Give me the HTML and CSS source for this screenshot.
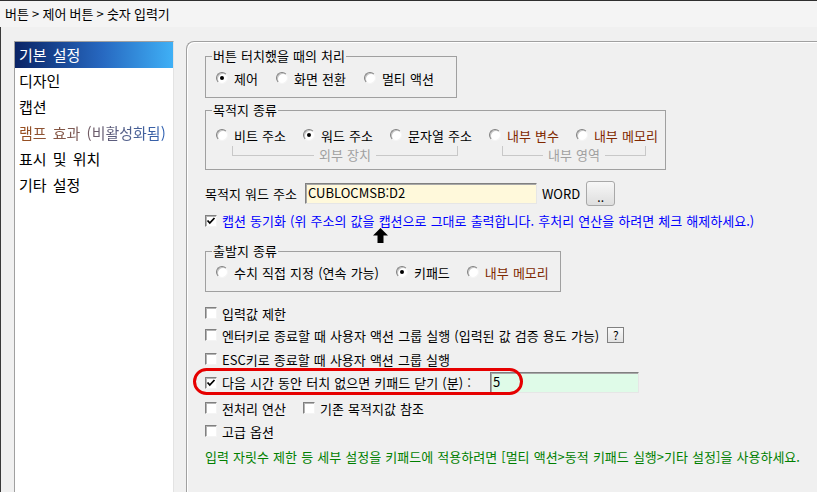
FILE: index.html
```html
<!DOCTYPE html>
<html lang="ko">
<head>
    <meta charset="UTF-8">
    <meta name="viewport" content="width=device-width, initial-scale=1.0">
    <title>숫자 입력기</title>
    <link rel="stylesheet" href="styles.css">
</head>
<body>
<div class="crumb">버튼 &gt; 제어 버튼 &gt; 숫자 입력기</div>

<div class="main">
    <ul class="menu">
        <li class="active">기본 설정</li>
        <li>디자인</li>
        <li>캡션</li>
        <li><span class="dim">램프 효과 (비활성화됨)</span></li>
        <li>표시 및 위치</li>
        <li>기타 설정</li>
    </ul>

    <div class="panel">
        <fieldset class="group g1">
            <legend>버튼 터치했을 때의 처리</legend>
            <div class="radios wide">
                <label class="opt"><span class="radio on"></span>제어</label>
                <label class="opt"><span class="radio"></span>화면 전환</label>
                <label class="opt"><span class="radio"></span>멀티 액션</label>
            </div>
        </fieldset>

        <fieldset class="group g2">
            <legend>목적지 종류</legend>
            <div class="radios">
                <label class="opt"><span class="radio"></span>비트 주소</label>
                <label class="opt"><span class="radio on"></span>워드 주소</label>
                <label class="opt"><span class="radio"></span>문자열 주소</label>
                <label class="opt brown"><span class="radio"></span>내부 변수</label>
                <label class="opt brown"><span class="radio"></span>내부 메모리</label>
            </div>
            <div class="ranges">
                <div class="range outer"><span>외부 장치</span></div>
                <div class="range inner"><span>내부 영역</span></div>
            </div>
        </fieldset>

        <div class="addr">
            <span class="addr-label">목적지 워드 주소</span>
            <input class="field" type="text" value="CUBLOCMSB:D2">
            <span class="unit">WORD</span>
            <button class="dots">..</button>
        </div>

        <div class="check-row sync">
            <span class="box on"><svg width="10" height="10" viewBox="0 0 10 10"><path d="M1.5 4.5 L3.8 7 L8.5 2" fill="none" stroke="#000" stroke-width="1.8"/></svg></span>
            <span class="blue">캡션 동기화 (위 주소의 값을 캡션으로 그대로 출력합니다. 후처리 연산을 하려면 체크 해제하세요.)</span>
        </div>
        <svg class="arrow" width="15" height="15" viewBox="0 0 15 15"><polygon points="7.5,0 15,7.5 10.5,7.5 10.5,15 4.5,15 4.5,7.5 0,7.5" fill="#000"/></svg>

        <fieldset class="group g3">
            <legend>출발지 종류</legend>
            <div class="radios">
                <label class="opt"><span class="radio"></span>수치 직접 지정 (연속 가능)</label>
                <label class="opt"><span class="radio on"></span>키패드</label>
                <label class="opt brown"><span class="radio"></span>내부 메모리</label>
            </div>
        </fieldset>

        <div class="check-row r1"><span class="box"></span>입력값 제한</div>
        <div class="check-row r2"><span class="box"></span>엔터키로 종료할 때 사용자 액션 그룹 실행 (입력된 값 검증 용도 가능)<button class="help">?</button></div>
        <div class="check-row r3"><span class="box"></span>ESC키로 종료할 때 사용자 액션 그룹 실행</div>
        <div class="check-row r4">
            <span class="box on"><svg width="10" height="10" viewBox="0 0 10 10"><path d="M1.5 4.5 L3.8 7 L8.5 2" fill="none" stroke="#000" stroke-width="1.8"/></svg></span>
            <span class="timeout-label">다음 시간 동안 터치 없으면 키패드 닫기 (분) :</span>
            <input class="field mint" type="text" value="5">
            <div class="ring"></div>
        </div>
        <div class="check-row r5">
            <span class="box"></span>전처리 연산
            <span class="box second"></span>기존 목적지값 참조
        </div>
        <div class="check-row r6"><span class="box"></span>고급 옵션</div>
        <div class="note">입력 자릿수 제한 등 세부 설정을 키패드에 적용하려면 [멀티 액션&gt;동적 키패드 실행&gt;기타 설정]을 사용하세요.</div>
    </div>
</div>
</body>
</html>
```

FILE: styles.css
```css
body {
    margin: 0;
    background-color: #f0f0f0;
    font-family: "Noto Sans CJK KR", "Noto Sans", sans-serif;
    font-size: 13px;
    color: #000;
    overflow: hidden;
}

.crumb {
    height: 26px;
    line-height: 26px;
    border-top: 1px solid #2f2f2f;
    background-color: #f4f4f4;
    padding-left: 5px;
    font-size: 13px;
    word-spacing: -0.5px;
}

.main {
    display: flex;
    height: 490px;
    padding-top: 14px;
    border-left: 1px solid #3a3a3a;
    box-sizing: border-box;
}

/* left menu */

.menu {
    list-style: none;
    margin: 0 0 0 13px;
    padding: 0;
    width: 160px;
    box-sizing: border-box;
    background: #fff;
    border: 1px solid;
    border-color: #a0a0a0 #e3e3e3 #e3e3e3 #a0a0a0;
    font-size: 15px;
    word-spacing: 2px;
}

.menu li {
    height: 26px;
    line-height: 26px;
    padding-left: 4px;
    white-space: nowrap;
}

.menu li.active {
    color: #fff;
    background: linear-gradient(90deg, #0a2466, #2768c0 55%, #3fb0f6);
}

.menu .dim {
    background: linear-gradient(90deg, #9a4e1c, #7a5a58 40%, #2f62b4);
    -webkit-background-clip: text;
    background-clip: text;
    color: transparent;
}

/* right panel */

.panel {
    flex: 1;
    margin-left: 12px;
    padding: 7px 0 0 18px;
    border-top: 1px solid #a0a0a0;
    border-left: 1px solid #a0a0a0;
    border-top-left-radius: 8px;
    box-shadow: inset 1px 1px 0 #fff;
    word-spacing: 0.5px;
}

.group {
    margin: 0;
    padding: 7px 0 11px 6px;
    border: 1px solid #a0a0a0;
    box-sizing: border-box;
    min-width: 0;
}

.group legend {
    padding: 0 1px;
    line-height: 14px;
}

.g1 {
    width: 252px;
}

.g2 {
    width: 461px;
    margin-top: 5px;
    padding-top: 10px;
    padding-bottom: 13px;
}

.g3 {
    width: 356px;
    margin-top: 1px;
    padding-top: 6px;
}

.radios {
    display: flex;
    gap: 17px;
    height: 16px;
    align-items: center;
    padding-left: 4px;
}

.radios.wide {
    gap: 18px;
}

.opt {
    display: flex;
    align-items: center;
    white-space: nowrap;
}

.brown {
    color: #802800;
}

.radio {
    position: relative;
    flex: none;
    width: 12px;
    height: 12px;
    margin-right: 6px;
    box-sizing: border-box;
    border-radius: 50%;
    border: 1px solid;
    border-color: #808080 #f4f4f4 #f4f4f4 #808080;
    box-shadow: inset 1px 1px 0 #c4c4c4;
    background: #fff;
}

.radio.on::after {
    content: "";
    position: absolute;
    left: 3px;
    top: 3px;
    width: 4px;
    height: 4px;
    border-radius: 50%;
    background: #000;
}

.ranges {
    display: flex;
    margin-top: 3px;
}

.range {
    position: relative;
    height: 10px;
    box-sizing: border-box;
    border: 1px solid #c8c8c8;
    border-top: none;
    color: #a0a0a0;
}

.range span {
    position: absolute;
    left: 50%;
    top: 9px;
    transform: translate(-50%, -50%);
    padding: 0 5px;
    background: #f0f0f0;
    line-height: 14px;
    white-space: nowrap;
}

.range.outer {
    margin-left: 20px;
    width: 226px;
}

.range.inner {
    margin-left: 44px;
    width: 144px;
}

/* address row */

.addr {
    display: flex;
    align-items: center;
    height: 25px;
    margin-top: 11px;
}

.addr-label {
    width: 100px;
    white-space: nowrap;
}

.field {
    width: 232px;
    height: 21px;
    box-sizing: border-box;
    margin: 0;
    padding: 0 2px 3px;
    border: 1px solid;
    border-color: #808080 #e6e6e6 #e6e6e6 #808080;
    box-shadow: inset 1px 1px 0 #a8a8a8;
    background: #fff9db;
    font: inherit;
    font-size: 13px;
    color: #000;
    outline: none;
}

.unit {
    margin: 0 6px 0 5px;
}

.dots {
    width: 29px;
    height: 25px;
    padding: 6px 0 0;
    border: 1px solid #a8a8a8;
    border-radius: 3px;
    background: linear-gradient(#f7f7f7, #dedede);
    font: inherit;
    font-size: 12px;
}

/* check rows */

.check-row {
    display: flex;
    align-items: center;
    height: 16px;
    white-space: nowrap;
}

.box {
    display: flex;
    align-items: center;
    justify-content: center;
    flex: none;
    width: 12px;
    height: 12px;
    margin-right: 5px;
    box-sizing: border-box;
    border: 1px solid;
    border-color: #808080 #f4f4f4 #f4f4f4 #808080;
    box-shadow: inset 1px 1px 0 #b4b4b4;
    background: #fff;
}

.box.second {
    margin-left: 17px;
}

.sync {
    height: 15px;
    margin-top: 7px;
}

.blue {
    color: #0000ff;
}

.arrow {
    display: block;
    margin-left: 168px;
}

.r1 { margin-top: 13px; }
.r2 { margin-top: 6px; }
.r3 { margin-top: 8px; }
.r5 { margin-top: 7px; }
.r6 { margin-top: 7px; }

.r4 {
    position: relative;
    height: 21px;
    margin-top: 5px;
}

.timeout-label {
    width: 268px;
}

.field.mint {
    width: 149px;
    background: #dffbe8;
}

.ring {
    position: absolute;
    left: -12px;
    top: -4px;
    width: 330px;
    height: 27px;
    box-sizing: border-box;
    border: 3px solid #e60000;
    border-radius: 14px;
}

.help {
    width: 17px;
    height: 16px;
    margin-left: 8px;
    padding: 0;
    border: 1px solid #808080;
    background: linear-gradient(#fafafa, #e2e2e2);
    font: inherit;
    font-size: 12px;
    line-height: 14px;
}

.note {
    margin-top: 10px;
    line-height: 16px;
    color: #008000;
    white-space: nowrap;
}
```
